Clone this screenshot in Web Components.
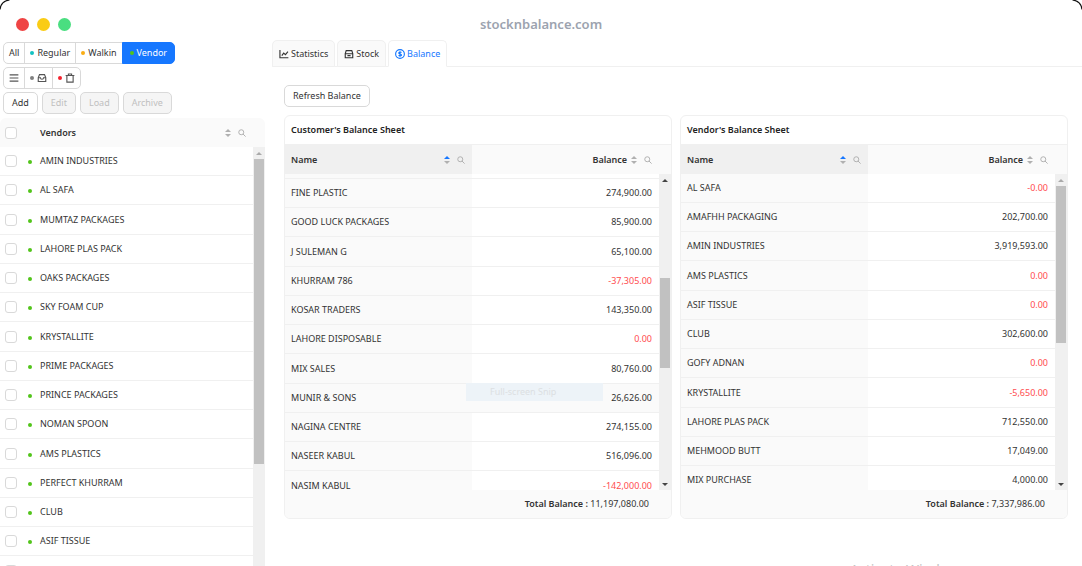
<!DOCTYPE html>
<html lang="en">
<head>
<meta charset="utf-8">
<title>stocknbalance.com</title>
<style>
html,body{height:100%;margin:0}
body{font-family:"Noto Sans","Open Sans",sans-serif;font-size:9px;line-height:16px;color:#333;background:#fff;overflow:hidden}
</style>
</head>
<body>
<stock-app></stock-app>
<script>
const define=(name,html,init)=>{
  const t=document.createElement('template');
  t.innerHTML=html;
  customElements.define(name,class extends HTMLElement{
    constructor(){super();this.attachShadow({mode:'open'}).append(t.content.cloneNode(true))}
    connectedCallback(){if(init&&!this.ready){this.ready=true;init(this,this.shadowRoot)}}
  });
};

const ICONS={
  menu:'<path d="M1 3h14M1 8h14M1 13h14"/>',
  inbox:'<path d="M2 7.500 4 2.500h8l2 5v6H2zM2 7.500h3.500c0 3.200 5 3.200 5 0H14"/>',
  trash:'<path d="M1 4h14M5.500 4V1.500h5V4M3 4.200V14.500h10V4.200"/>',
  chart:'<path d="M1.500 1.500v12.500h13.500M4.500 10.500l3-4 2.800 2.500 4-4.800"/>',
  stock:'<path d="M2 7.500h12v6.500H2zM2 7.500l1.500-5h9l1.500 5M5.500 10.500h5"/>',
  dollar:'<circle cx="8" cy="8" r="7"/><path d="M10.300 5.900C9.800 4.300 6 4.400 6 6.300c0 2.100 4.500 1.200 4.500 3.400 0 1.900-4 1.900-4.700.2M8 3.500v9"/>',
  search:'<circle cx="6.500" cy="6.500" r="5"/><path d="M10 10l5.200 5.200"/>'
};
define('app-icon',`<style>
:host{display:inline-flex;flex:none;width:10px;height:10px}
svg{width:100%;height:100%;fill:none;stroke:currentColor;stroke-width:1.8}
</style><svg viewBox="0 0 16 16" aria-hidden="true"></svg>`,(el,r)=>{
  r.querySelector('svg').innerHTML=ICONS[el.getAttribute('name')];
});

define('sort-mark',`<style>
:host{display:inline-flex;flex:none;flex-direction:column;gap:2px;color:#b0b0b0}
i{border:3px solid transparent;border-top:0;border-bottom:3px solid currentColor}
i+i{border-bottom:0;border-top:3px solid currentColor}
:host([active]) i:first-of-type{border-bottom-color:#1677ff}
</style><i></i><i></i>`);

define('status-dot',`<style>
:host{display:inline-block;flex:none;width:4px;height:4px;border-radius:50%;background:var(--dot,#52c41a)}
</style>`);

define('scroll-bar',`<style>
:host{display:flex;flex-direction:column;width:12px;background:#f0f0f0}
i{flex:none;height:12px;display:flex;align-items:center;justify-content:center}
i::before{content:"";border:3px solid transparent;border-top:0;border-bottom:3px solid var(--up,#444)}
.down::before{border-bottom:0;border-top:3px solid #444}
.track{flex:1;display:flex;flex-direction:column;align-items:center}
.before{flex:var(--before,0) 0 0}.thumb{flex:var(--thumb,1) 0 0;width:10px;background:#c1c1c1}.after{flex:var(--after,1) 0 0}
</style><i></i><div class="track"><div class="before"></div><div class="thumb"></div><div class="after"></div></div><i class="down"></i>`);

define('window-bar',`<style>
:host{display:grid;grid-template-columns:1fr auto 1fr;align-items:center;height:40px;padding:4px 16px;box-sizing:border-box}
.lights{display:flex;gap:8px;padding-top:8px}
i{width:13px;height:13px;border-radius:50%;background:#ef4444}
i:nth-child(2){background:#facc15}i:nth-child(3){background:#4ade80}
h1{margin:0;padding-top:8px;font-size:13px;line-height:20px;font-weight:600;color:#9ca3af}
</style><div class="lights"><i></i><i></i><i></i></div><h1><slot></slot></h1>`);

define('button-group',`<style>
:host{display:flex}
::slotted(app-button){margin-right:-1px}
</style><slot></slot>`);

define('app-button',`<style>
:host{display:inline-flex;vertical-align:top}
button{font:inherit;line-height:20px;height:22px;box-sizing:border-box;padding:0 var(--pad,5px);border:1px solid #d9d9d9;border-radius:var(--radius,5px);background:#fff;color:#333;display:flex;align-items:center;gap:3px;white-space:nowrap}
:host([primary]) button{background:#1677ff;border-color:#1677ff;color:#fff}
:host([primary]){--pad:7px}
button:disabled{background:#f5f5f5;color:#bfbfbf}
:host([place=first]){--radius:5px 0 0 5px}
:host([place=mid]){--radius:0}
:host([place=last]){--radius:0 5px 5px 0}
</style><button type="button"><slot></slot></button>`,(el,r)=>{
  const b=r.querySelector('button');
  b.disabled=el.hasAttribute('off');
  if(el.hasAttribute('label'))b.setAttribute('aria-label',el.getAttribute('label'));
});

define('vendor-list',`<style>
:host{flex:1;min-height:0;display:flex;flex-direction:column;overflow:hidden}
table{width:100%;border-collapse:separate;border-spacing:0;table-layout:fixed}
th,td{box-sizing:border-box;height:29px;padding:0;text-align:left;font-weight:400}
tbody tr:nth-child(4n+3) td{height:30px}
td{border-bottom:1px solid #f0f0f0}
.pick{width:24px;padding-left:5px}
.dot{width:16px}
input{appearance:none;display:block;box-sizing:border-box;width:12px;height:12px;margin:0;border:1px solid #d9d9d9;border-radius:3px;background:#fff}
status-dot{display:block;margin:2px 0 0 4px}
.head{background:#fafafa;border-radius:6px 6px 0 0}
.head th{font-weight:600}
.label{display:flex;align-items:center;height:29px}
.label b{flex:1;font-weight:600}
.label sort-mark{margin-right:7px}
.label app-icon{width:8px;height:8px;color:#aaa;margin-right:19px}
.view{flex:1;min-height:0;display:flex;overflow:hidden}
.rows{flex:1;min-width:0}
scroll-bar{--up:#aaa;--thumb:304;--after:130;height:460px}
</style>
<table class="head"><thead><tr><th class="pick"><input type="checkbox" aria-label="Select all vendors"></th><th class="dot"></th><th><div class="label"><b>Vendors</b><sort-mark></sort-mark><app-icon name="search"></app-icon></div></th></tr></thead></table>
<div class="view"><div class="rows"><table><tbody></tbody></table></div><scroll-bar></scroll-bar></div>`,(el,r)=>{
  r.querySelector('tbody').innerHTML=el.getAttribute('names').split('|').map(n=>
    `<tr><td class="pick"><input type="checkbox" aria-label="${n}"></td><td class="dot"><status-dot></status-dot></td><td>${n}</td></tr>`).join('');
});

define('side-panel',`<style>
:host{display:flex;flex-direction:column;min-height:0}
.tools{display:flex;flex-direction:column;gap:3px;padding:2px 3px 4px}
.line{display:flex;gap:4px}
.line app-button{--pad:8px}
.tools app-icon{color:#555}
</style>
<div class="tools">
<button-group><app-button place="first">All</app-button><app-button place="mid"><status-dot style="--dot:#13c2c2"></status-dot>Regular</app-button><app-button place="mid"><status-dot style="--dot:#faad14"></status-dot>Walkin</app-button><app-button place="last" primary><status-dot></status-dot>Vendor</app-button></button-group>
<button-group><app-button place="first" label="List"><app-icon name="menu"></app-icon></app-button><app-button place="mid" label="Archived"><status-dot style="--dot:#808080"></status-dot><app-icon name="inbox"></app-icon></app-button><app-button place="last" label="Deleted"><status-dot style="--dot:#f5222d"></status-dot><app-icon name="trash"></app-icon></app-button></button-group>
<div class="line"><app-button>Add</app-button><app-button off>Edit</app-button><app-button off>Load</app-button><app-button off>Archive</app-button></div>
</div>
<vendor-list names="AMIN INDUSTRIES|AL SAFA|MUMTAZ PACKAGES|LAHORE PLAS PACK|OAKS PACKAGES|SKY FOAM CUP|KRYSTALLITE|PRIME PACKAGES|PRINCE PACKAGES|NOMAN SPOON|AMS PLASTICS|PERFECT KHURRAM|CLUB|ASIF TISSUE|MALIK PLASTIC"></vendor-list>`);

define('tab-strip',`<style>
:host{display:flex;gap:2px;align-items:flex-end;border-bottom:1px solid #f0f0f0;height:26px}
button{font:inherit;height:27px;margin-bottom:-1px;box-sizing:border-box;padding:0 6px;display:flex;align-items:center;gap:2px;border:1px solid #f0f0f0;border-radius:5px 5px 0 0;background:#fafafa;color:#333}
button[aria-selected=true]{background:#fff;border-bottom-color:#fff;color:#1677ff}
</style>
<button type="button" role="tab"><app-icon name="chart"></app-icon>Statistics</button>
<button type="button" role="tab"><app-icon name="stock"></app-icon>Stock</button>
<button type="button" role="tab" aria-selected="true"><app-icon name="dollar"></app-icon>Balance</button>`);

define('balance-sheet',`<style>
:host{display:block;min-width:0;border:1px solid #f0f0f0;border-radius:6px;overflow:hidden}
h2{margin:0;padding:0 6px;font-size:9px;line-height:28px;font-weight:600;color:#222}
table{width:100%;border-collapse:separate;border-spacing:0;table-layout:fixed}
.head{border-top:1px solid #f0f0f0;background:#fafafa}
th,td{box-sizing:border-box;height:29px;padding:0 7px 0 6px;font-weight:400}
tbody tr:nth-child(4n) td{height:30px}
td{border-bottom:1px solid #f0f0f0}
th:first-child,td:first-child{width:187px;text-align:left;background:#fafafa}
th:first-child{background:#f0f0f0}
td:last-child{text-align:right}
tr.stub td{height:5px;padding:0}
tr.hot td{background:#fafafa}
.neg{color:#ff4d4f}
.label{display:flex;align-items:center;justify-content:flex-end}
b{font-weight:600}
th:first-child b{flex:1}
sort-mark{margin:0 7px 0 4px}
.label app-icon{width:8px;height:8px;color:#aaa}
th:last-child{padding-right:19px}
.view{display:flex;height:316px;overflow:hidden}
.rows{flex:1;min-width:0;overflow:hidden}
footer{background:#fafafa;height:28px;line-height:28px;text-align:right;padding-right:22px}
</style>
<h2></h2>
<table class="head"><thead><tr><th><div class="label"><b>Name</b><sort-mark active></sort-mark><app-icon name="search"></app-icon></div></th><th><div class="label"><b>Balance</b><sort-mark></sort-mark><app-icon name="search"></app-icon></div></th></tr></thead></table>
<div class="view"><div class="rows"><table><tbody></tbody></table></div><scroll-bar></scroll-bar></div>
<footer><b>Total Balance :</b> <slot></slot></footer>`,(el,r)=>{
  const hot=el.getAttribute('hot');
  r.querySelector('h2').textContent=el.getAttribute('heading');
  r.querySelector('tbody').innerHTML=(el.hasAttribute('scrolled')?'<tr class="stub"><td></td><td></td></tr>':'')+
    el.getAttribute('rows').split('|').map(x=>{
      const [n,v]=x.split(':');
      return `<tr${n===hot?' class="hot"':''}><td>${n.replace('&','&amp;')}</td><td${v[0]==='-'||v==='0.00'?' class="neg"':''}>${v}</td></tr>`;
    }).join('');
});

define('balance-page',`<style>
:host{display:block;min-width:0;padding-left:7px}
.body{padding:18px 14px 0 12px}
.sheets{display:grid;grid-template-columns:1fr 1fr;gap:8px;margin-top:8px}
app-button{--pad:8px}
.c{--before:92;--thumb:90;--after:110}
.v{--up:#aaa;--thumb:157;--after:135}
</style>
<tab-strip role="tablist"></tab-strip>
<div class="body">
<app-button>Refresh Balance</app-button>
<div class="sheets">
<balance-sheet class="c" scrolled hot="MUNIR &amp; SONS" heading="Customer's Balance Sheet" rows="FINE PLASTIC:274,900.00|GOOD LUCK PACKAGES:85,900.00|J SULEMAN G:65,100.00|KHURRAM 786:-37,305.00|KOSAR TRADERS:143,350.00|LAHORE DISPOSABLE:0.00|MIX SALES:80,760.00|MUNIR &amp; SONS:26,626.00|NAGINA CENTRE:274,155.00|NASEER KABUL:516,096.00|NASIM KABUL:-142,000.00">11,197,080.00</balance-sheet>
<balance-sheet class="v" heading="Vendor's Balance Sheet" rows="AL SAFA:-0.00|AMAFHH PACKAGING:202,700.00|AMIN INDUSTRIES:3,919,593.00|AMS PLASTICS:0.00|ASIF TISSUE:0.00|CLUB:302,600.00|GOFY ADNAN:0.00|KRYSTALLITE:-5,650.00|LAHORE PLAS PACK:712,550.00|MEHMOOD BUTT:17,049.00|MIX PURCHASE:4,000.00">7,337,986.00</balance-sheet>
</div></div>`);

define('stock-app',`<style>
:host{position:relative;display:grid;grid-template-columns:265px minmax(0,1fr);grid-template-rows:auto minmax(0,1fr);height:100%;overflow:hidden;background:#fff}
window-bar{grid-column:1/3}
.snip{position:absolute;left:466px;top:383px;width:113px;padding-left:24px;line-height:18px;background:#edf3f8;color:#dcdfe2}
.watermark{position:absolute;left:850px;top:560px;font-size:14px;line-height:20px;color:#c4c4c4}
.edge{position:absolute;inset:0;border-radius:10px 10px 0 0;pointer-events:none}
.edge svg{position:absolute;top:0;left:0;width:10px;height:10px;fill:none;stroke:#111;stroke-width:1.2}
.edge svg+svg{left:auto;right:0}
</style>
<window-bar>stocknbalance.com</window-bar>
<side-panel></side-panel>
<balance-page></balance-page>
<div class="snip">Full-screen Snip</div>
<div class="watermark">Activate Windows</div>
<div class="edge"><svg viewBox="0 0 10 10"><path d="M0 9.500Q1 1 9.500 0"/></svg><svg viewBox="0 0 10 10"><path d="M10 9.500Q9 1 .5 0"/></svg></div>`);
</script>
</body>
</html>
